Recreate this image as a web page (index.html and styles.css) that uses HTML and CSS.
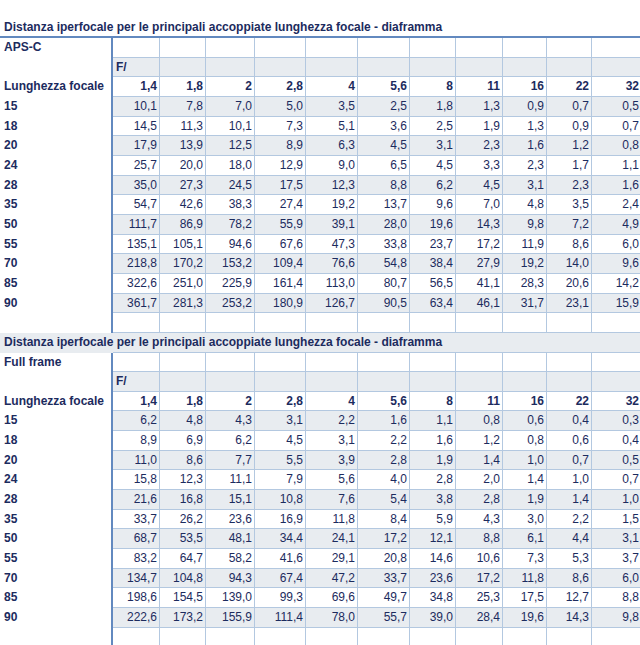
FILE: index.html
```html
<!DOCTYPE html>
<html lang="it">
<head>
<meta charset="utf-8">
<title>Distanza iperfocale</title>
<link rel="stylesheet" href="styles.css">
</head>
<body>
<div class="sheet">
  <div class="title">Distanza iperfocale per le principali accoppiate lunghezza focale - diaframma</div>

  <div class="r"><b>APS-C</b><span></span><span></span><span></span><span></span><span></span><span></span><span></span><span></span><span></span><span></span><span></span></div>
  <div class="r band"><b></b><span class="f">F/</span><span></span><span></span><span></span><span></span><span></span><span></span><span></span><span></span><span></span><span></span></div>
  <div class="r hd"><b>Lunghezza focale</b><span>1,4</span><span>1,8</span><span>2</span><span>2,8</span><span>4</span><span>5,6</span><span>8</span><span>11</span><span>16</span><span>22</span><span>32</span></div>
  <div class="r band"><b>15</b><span>10,1</span><span>7,8</span><span>7,0</span><span>5,0</span><span>3,5</span><span>2,5</span><span>1,8</span><span>1,3</span><span>0,9</span><span>0,7</span><span>0,5</span></div>
  <div class="r"><b>18</b><span>14,5</span><span>11,3</span><span>10,1</span><span>7,3</span><span>5,1</span><span>3,6</span><span>2,5</span><span>1,9</span><span>1,3</span><span>0,9</span><span>0,7</span></div>
  <div class="r band"><b>20</b><span>17,9</span><span>13,9</span><span>12,5</span><span>8,9</span><span>6,3</span><span>4,5</span><span>3,1</span><span>2,3</span><span>1,6</span><span>1,2</span><span>0,8</span></div>
  <div class="r"><b>24</b><span>25,7</span><span>20,0</span><span>18,0</span><span>12,9</span><span>9,0</span><span>6,5</span><span>4,5</span><span>3,3</span><span>2,3</span><span>1,7</span><span>1,1</span></div>
  <div class="r band"><b>28</b><span>35,0</span><span>27,3</span><span>24,5</span><span>17,5</span><span>12,3</span><span>8,8</span><span>6,2</span><span>4,5</span><span>3,1</span><span>2,3</span><span>1,6</span></div>
  <div class="r"><b>35</b><span>54,7</span><span>42,6</span><span>38,3</span><span>27,4</span><span>19,2</span><span>13,7</span><span>9,6</span><span>7,0</span><span>4,8</span><span>3,5</span><span>2,4</span></div>
  <div class="r band"><b>50</b><span>111,7</span><span>86,9</span><span>78,2</span><span>55,9</span><span>39,1</span><span>28,0</span><span>19,6</span><span>14,3</span><span>9,8</span><span>7,2</span><span>4,9</span></div>
  <div class="r"><b>55</b><span>135,1</span><span>105,1</span><span>94,6</span><span>67,6</span><span>47,3</span><span>33,8</span><span>23,7</span><span>17,2</span><span>11,9</span><span>8,6</span><span>6,0</span></div>
  <div class="r band"><b>70</b><span>218,8</span><span>170,2</span><span>153,2</span><span>109,4</span><span>76,6</span><span>54,8</span><span>38,4</span><span>27,9</span><span>19,2</span><span>14,0</span><span>9,6</span></div>
  <div class="r"><b>85</b><span>322,6</span><span>251,0</span><span>225,9</span><span>161,4</span><span>113,0</span><span>80,7</span><span>56,5</span><span>41,1</span><span>28,3</span><span>20,6</span><span>14,2</span></div>
  <div class="r band"><b>90</b><span>361,7</span><span>281,3</span><span>253,2</span><span>180,9</span><span>126,7</span><span>90,5</span><span>63,4</span><span>46,1</span><span>31,7</span><span>23,1</span><span>15,9</span></div>
  <div class="r"><b></b><span></span><span></span><span></span><span></span><span></span><span></span><span></span><span></span><span></span><span></span><span></span></div>

  <div class="r t2"><b>Distanza iperfocale per le principali accoppiate lunghezza focale - diaframma</b><span></span><span></span><span></span><span></span><span></span><span></span><span></span><span></span><span></span><span></span><span></span></div>
  <div class="r"><b>Full frame</b><span></span><span></span><span></span><span></span><span></span><span></span><span></span><span></span><span></span><span></span><span></span></div>
  <div class="r band"><b></b><span class="f">F/</span><span></span><span></span><span></span><span></span><span></span><span></span><span></span><span></span><span></span><span></span></div>
  <div class="r hd"><b>Lunghezza focale</b><span>1,4</span><span>1,8</span><span>2</span><span>2,8</span><span>4</span><span>5,6</span><span>8</span><span>11</span><span>16</span><span>22</span><span>32</span></div>
  <div class="r band"><b>15</b><span>6,2</span><span>4,8</span><span>4,3</span><span>3,1</span><span>2,2</span><span>1,6</span><span>1,1</span><span>0,8</span><span>0,6</span><span>0,4</span><span>0,3</span></div>
  <div class="r"><b>18</b><span>8,9</span><span>6,9</span><span>6,2</span><span>4,5</span><span>3,1</span><span>2,2</span><span>1,6</span><span>1,2</span><span>0,8</span><span>0,6</span><span>0,4</span></div>
  <div class="r band"><b>20</b><span>11,0</span><span>8,6</span><span>7,7</span><span>5,5</span><span>3,9</span><span>2,8</span><span>1,9</span><span>1,4</span><span>1,0</span><span>0,7</span><span>0,5</span></div>
  <div class="r"><b>24</b><span>15,8</span><span>12,3</span><span>11,1</span><span>7,9</span><span>5,6</span><span>4,0</span><span>2,8</span><span>2,0</span><span>1,4</span><span>1,0</span><span>0,7</span></div>
  <div class="r band"><b>28</b><span>21,6</span><span>16,8</span><span>15,1</span><span>10,8</span><span>7,6</span><span>5,4</span><span>3,8</span><span>2,8</span><span>1,9</span><span>1,4</span><span>1,0</span></div>
  <div class="r"><b>35</b><span>33,7</span><span>26,2</span><span>23,6</span><span>16,9</span><span>11,8</span><span>8,4</span><span>5,9</span><span>4,3</span><span>3,0</span><span>2,2</span><span>1,5</span></div>
  <div class="r band"><b>50</b><span>68,7</span><span>53,5</span><span>48,1</span><span>34,4</span><span>24,1</span><span>17,2</span><span>12,1</span><span>8,8</span><span>6,1</span><span>4,4</span><span>3,1</span></div>
  <div class="r"><b>55</b><span>83,2</span><span>64,7</span><span>58,2</span><span>41,6</span><span>29,1</span><span>20,8</span><span>14,6</span><span>10,6</span><span>7,3</span><span>5,3</span><span>3,7</span></div>
  <div class="r band"><b>70</b><span>134,7</span><span>104,8</span><span>94,3</span><span>67,4</span><span>47,2</span><span>33,7</span><span>23,6</span><span>17,2</span><span>11,8</span><span>8,6</span><span>6,0</span></div>
  <div class="r"><b>85</b><span>198,6</span><span>154,5</span><span>139,0</span><span>99,3</span><span>69,6</span><span>49,7</span><span>34,8</span><span>25,3</span><span>17,5</span><span>12,7</span><span>8,8</span></div>
  <div class="r band"><b>90</b><span>222,6</span><span>173,2</span><span>155,9</span><span>111,4</span><span>78,0</span><span>55,7</span><span>39,0</span><span>28,4</span><span>19,6</span><span>14,3</span><span>9,8</span></div>
  <div class="r"><b></b><span></span><span></span><span></span><span></span><span></span><span></span><span></span><span></span><span></span><span></span><span></span></div>
</div>
</body>
</html>
```

FILE: styles.css
```css
html, body {
  margin: 0;
  padding: 0;
  background: #ffffff;
  overflow: hidden;
}

body {
  font-family: "Liberation Sans", Arial, Helvetica, sans-serif;
  font-size: 12px;
  color: #1c2b5e;
}

.sheet {
  width: 642px;
  padding-top: 18px;
}

.title {
  box-sizing: border-box;
  height: 20px;
  line-height: 18px;
  padding-left: 4px;
  font-weight: bold;
  white-space: nowrap;
  border-bottom: 2px solid #6289bf;
}

.r {
  display: grid;
  grid-template-columns: 113px 47px 46px 49px 51px 52px 52px 46px 47px 44px 45px 50px;
  height: 19.67px;
}

.r > b {
  box-sizing: border-box;
  font-weight: bold;
  padding-left: 4px;
  line-height: 18.67px;
  white-space: nowrap;
  border-right: 2px solid #6289bf;
}

.r > span {
  box-sizing: border-box;
  text-align: right;
  padding-right: 2px;
  line-height: 18.67px;
  white-space: nowrap;
  border-right: 1px solid #b3c8e0;
  border-bottom: 1px solid #b3c8e0;
}

.band > span {
  background: #e8ecf0;
}

.hd > span {
  font-weight: bold;
}

.r > span.f {
  text-align: left;
  padding-left: 3px;
  font-weight: bold;
}

.t2 {
  background: #e8ecf0;
}

.t2 > b {
  border-right: none;
}

.t2 > span {
  background: transparent;
  border-right: none;
}
```
